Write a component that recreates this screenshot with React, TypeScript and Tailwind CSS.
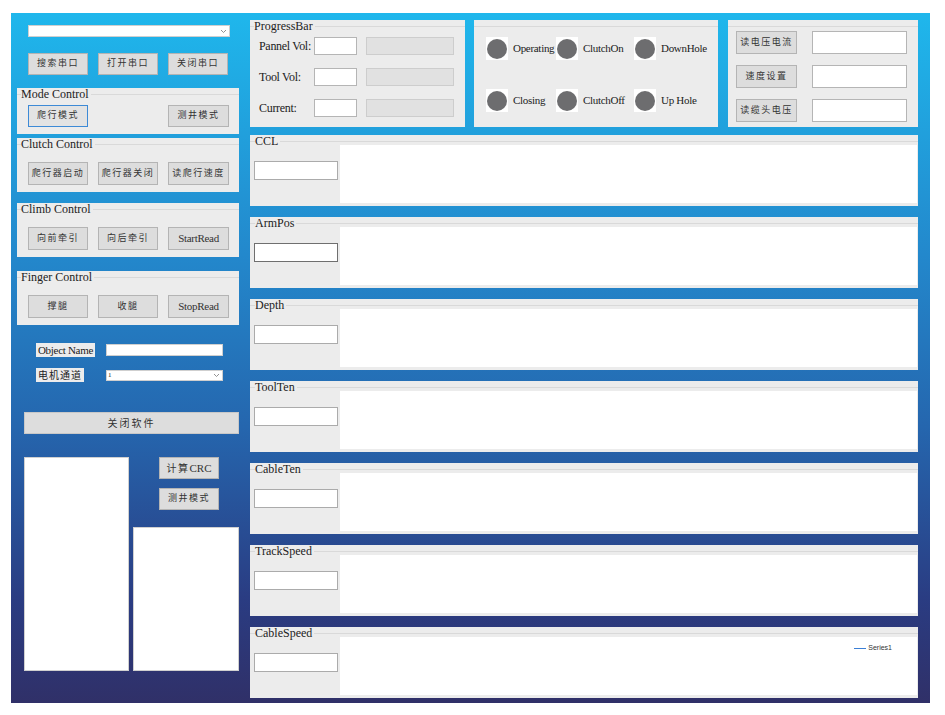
import React from 'react'

const serif = "font-['Liberation_Serif','Noto_Sans_CJK_SC',serif]"

interface BtnProps {
    label: string
    className?: string
    active?: boolean
    latin?: boolean
    big?: boolean
}

function Btn({ label, className = '', active = false, latin = false, big = false }: BtnProps) {
    const text = latin ? 'text-[11px] tracking-[-0.3px]' : big ? 'text-[10px] tracking-[2px]' : 'text-[9px] tracking-[1.5px]'
    return (
        <div
            className={`flex items-center justify-center whitespace-nowrap border text-[#333] ${text} ${active ? 'border-[#3d8ad6] bg-[#e3e3e3]' : 'border-[#b4b4b4] bg-[#dddddd]'} ${className}`}
        >
            {label}
        </div>
    )
}

function Chevron() {
    return (
        <svg width="7" height="5" viewBox="0 0 7 5" className="shrink-0">
            <path d="M1 1 L3.5 3.5 L6 1" fill="none" stroke="#777" strokeWidth="0.8" />
        </svg>
    )
}

function Group({ title, className = '', children }: { title: string; className?: string; children?: React.ReactNode }) {
    return (
        <div className={`relative bg-[#ececec] ${className}`}>
            <div className="absolute left-0 right-0 top-[6px] border-t border-[#d9d9d9]" />
            <div className="relative ml-[4px] w-fit whitespace-nowrap bg-[#ececec] pr-[2px] text-[12px] leading-[13px] text-[#222]">{title}</div>
            {children}
        </div>
    )
}

function ChartPanel({ title, legend = false, focused = false }: { title: string; legend?: boolean; focused?: boolean }) {
    return (
        <div className="relative flex h-[71px] bg-[#ececec]">
            <div className="absolute left-0 right-0 top-[6px] border-t border-[#d9d9d9]" />
            <div className="flex w-[90px] shrink-0 flex-col">
                <div className="relative ml-[5px] self-start bg-[#ececec] pr-[2px] text-[12px] leading-[13px] text-[#222]">{title}</div>
                <div className={`ml-[4px] mt-[13px] h-[19px] w-[84px] border bg-white ${focused ? 'border-[#6f6f6f]' : 'border-[#ababab]'}`} />
            </div>
            <div className="relative mb-[3px] mr-[1px] mt-[10px] flex-1 bg-white">
                {legend && (
                    <div className="absolute right-[25px] top-[6px] flex items-center gap-[2px] font-['Liberation_Sans',sans-serif] text-[7px] text-[#333]">
                        <span className="inline-block h-[1px] w-[12px] bg-[#3b7fd6]" />
                        Series1
                    </div>
                )}
            </div>
        </div>
    )
}

function Lamp({ label }: { label: string }) {
    return (
        <div className="flex items-center">
            <div className="flex h-[23px] w-[22px] shrink-0 items-center justify-center bg-white">
                <div className="h-[20px] w-[20px] rounded-full bg-[#6d6d6f]" />
            </div>
            <span className="ml-[5px] whitespace-nowrap text-[11px] tracking-[-0.3px] text-[#222]">{label}</span>
        </div>
    )
}

export default function App() {
    const charts = ['CCL', 'ArmPos', 'Depth', 'ToolTen', 'CableTen', 'TrackSpeed', 'CableSpeed']

    return (
        <div className={`h-[715px] w-[945px] bg-white pl-[11px] pt-[13px] ${serif}`}>
            <div className="flex h-[690px] w-[919px] bg-[linear-gradient(to_bottom,#1fb7ec_0%,#2388cc_35%,#2566ae_60%,#2a3c82_85%,#303068_100%)]">
                {/* left column */}
                <div className="ml-[6px] flex w-[222px] shrink-0 flex-col">
                    <div className="ml-[11px] mt-[12px] flex h-[12px] w-[202px] items-center justify-end border border-[#cfcfcf] bg-white pr-[2px]">
                        <Chevron />
                    </div>
                    <div className="ml-[11px] mt-[16px] flex gap-[10px]">
                        <Btn label="搜索串口" className="h-[22px] w-[60px]" />
                        <Btn label="打开串口" className="h-[22px] w-[60px]" />
                        <Btn label="关闭串口" className="h-[22px] w-[60px]" />
                    </div>

                    <Group title="Mode Control" className="mt-[13px] h-[46px]">
                        <div className="ml-[11px] mt-[4px] flex justify-between pr-[10px]">
                            <Btn label="爬行模式" active className="h-[22px] w-[60px]" />
                            <Btn label="测井模式" className="h-[22px] w-[61px]" />
                        </div>
                    </Group>

                    <Group title="Clutch Control" className="mt-[4px] h-[54px]">
                        <div className="ml-[11px] mt-[11px] flex gap-[10px]">
                            <Btn label="爬行器启动" className="h-[23px] w-[60px]" />
                            <Btn label="爬行器关闭" className="h-[23px] w-[60px]" />
                            <Btn label="读爬行速度" className="h-[23px] w-[61px]" />
                        </div>
                    </Group>

                    <Group title="Climb Control" className="mt-[11px] h-[54px]">
                        <div className="ml-[11px] mt-[11px] flex gap-[10px]">
                            <Btn label="向前牵引" className="h-[23px] w-[60px]" />
                            <Btn label="向后牵引" className="h-[23px] w-[60px]" />
                            <Btn label="StartRead" latin className="h-[23px] w-[61px]" />
                        </div>
                    </Group>

                    <Group title="Finger Control" className="mt-[14px] h-[54px]">
                        <div className="ml-[11px] mt-[11px] flex gap-[10px]">
                            <Btn label="撑腿" className="h-[23px] w-[60px]" />
                            <Btn label="收腿" className="h-[23px] w-[60px]" />
                            <Btn label="StopRead" latin className="h-[23px] w-[61px]" />
                        </div>
                    </Group>

                    <div className="ml-[19px] mt-[18px] flex items-center">
                        <div className="flex h-[14px] w-[59px] items-center justify-center whitespace-nowrap bg-[#ececec] text-[11px] tracking-[-0.3px] text-[#222]">Object Name</div>
                        <div className="ml-[11px] h-[12px] w-[117px] border border-[#cfcfcf] bg-white" />
                    </div>
                    <div className="ml-[19px] mt-[11px] flex items-center">
                        <div className="flex h-[14px] w-[48px] items-center justify-center whitespace-nowrap bg-[#ececec] text-[10px] tracking-[1px] text-[#222]">电机通道</div>
                        <div className="ml-[22px] flex h-[11px] w-[117px] items-center justify-between border border-[#cfcfcf] bg-white pl-[1px] pr-[2px] text-[7px] leading-none text-[#222]">
                            1
                            <Chevron />
                        </div>
                    </div>

                    <Btn label="关闭软件" big className="ml-[7px] mt-[30px] h-[22px] w-[215px] border-[#c8c8c8]" />

                    <div className="ml-[7px] mt-[23px] flex">
                        <div className="h-[214px] w-[105px] border border-[#d0d0d0] bg-white" />
                        <div className="ml-[4px] flex w-[106px] flex-col">
                            <div className="ml-[26px] flex h-[22px] w-[60px] items-center justify-center border border-[#b4b4b4] bg-[#dddddd] text-[10px] text-[#333]">
                                <span className="tracking-[1.5px]">计算</span>
                                <span className="font-['Liberation_Serif',serif] text-[11px]">CRC</span>
                            </div>
                            <Btn label="测井模式" className="ml-[26px] mt-[9px] h-[22px] w-[60px]" />
                            <div className="mt-[17px] h-[144px] w-[106px] border border-[#d0d0d0] bg-white" />
                        </div>
                    </div>
                </div>

                {/* right column */}
                <div className="ml-[11px] flex w-[668px] shrink-0 flex-col">
                    <div className="mt-[7px] flex h-[107px]">
                        <Group title="ProgressBar" className="h-[107px] w-[215px]">
                            <div className="mt-[4px] flex flex-col gap-[13px]">
                                {['Pannel Vol:', 'Tool Vol:', 'Current:'].map((t) => (
                                    <div key={t} className="flex items-center">
                                        <span className="ml-[9px] w-[55px] whitespace-nowrap text-[12px] tracking-[-0.3px] text-[#222]">{t}</span>
                                        <div className="h-[18px] w-[43px] border border-[#b5b5b5] bg-white" />
                                        <div className="ml-[9px] h-[18px] w-[88px] border border-[#cdcdcd] bg-[#e1e1e1]" />
                                    </div>
                                ))}
                            </div>
                        </Group>

                        <div className="relative ml-[9px] h-[107px] w-[244px] bg-[#ececec]">
                            <div className="absolute left-0 right-0 top-[6px] border-t border-[#d9d9d9]" />
                            <div className="ml-[12px] mt-[17px] grid grid-cols-[70px_78px_80px] gap-y-[29px]">
                                <Lamp label="Operating" />
                                <Lamp label="ClutchOn" />
                                <Lamp label="DownHole" />
                                <Lamp label="Closing" />
                                <Lamp label="ClutchOff" />
                                <Lamp label="Up Hole" />
                            </div>
                        </div>

                        <div className="relative ml-[10px] h-[107px] w-[190px] bg-[#ececec]">
                            <div className="absolute left-0 right-0 top-[6px] border-t border-[#d9d9d9]" />
                            <div className="ml-[8px] mt-[11px] flex flex-col gap-[11px]">
                                {['读电压电流', '速度设置', '读缆头电压'].map((t) => (
                                    <div key={t} className="flex items-center">
                                        <Btn label={t} className="h-[23px] w-[61px]" />
                                        <div className="ml-[15px] h-[23px] w-[95px] border border-[#b5b5b5] bg-white" />
                                    </div>
                                ))}
                            </div>
                        </div>
                    </div>

                    <div className="mt-[8px] flex flex-col gap-[11px]">
                        {charts.map((c) => (
                            <ChartPanel key={c} title={c} legend={c === 'CableSpeed'} focused={c === 'ArmPos'} />
                        ))}
                    </div>
                </div>
            </div>
        </div>
    )
}
